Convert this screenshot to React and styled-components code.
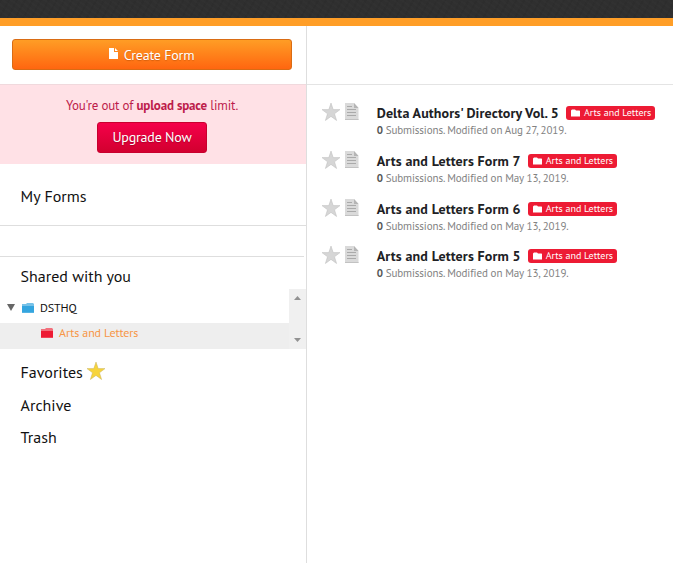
import React from "react";
import styled, { createGlobalStyle } from "styled-components";

const Global = createGlobalStyle`
  * { box-sizing: border-box; }
  body { margin: 0; background: #fff; overflow: hidden; font-family: "PT Sans", "Noto Sans", sans-serif; color: #111; }
  button { font: inherit; margin: 0; }
  svg { display: block; flex: none; }
`;

const Page = styled.div`
  width: 673px;
  height: 563px;
  display: flex;
  flex-direction: column;
`;

const TopBar = styled.header`
  flex: none;
  height: 26px;
  border-bottom: 8px solid #ff9e27;
  background:
    repeating-linear-gradient(37deg, rgba(255, 255, 255, 0.012) 0 2px, transparent 2px 5px),
    repeating-linear-gradient(118deg, rgba(0, 0, 0, 0.05) 0 2px, transparent 2px 7px),
    #2f2f2f;
`;

const Body = styled.div`
  flex: 1;
  display: flex;
`;

const Sidebar = styled.aside`
  width: 307px;
  border-right: 1px solid #dedede;
  display: flex;
  flex-direction: column;
`;

const Main = styled.main`
  flex: 1;
`;

const HeaderCell = styled.div`
  height: 59px;
  padding: 13px 14px 0 12px;
  border-bottom: 1px solid ${(p) => p.$line};
`;

const Text = styled.span`
  font-size: ${(p) => p.$size}px;
  letter-spacing: ${(p) => p.$track || 0}px;
  white-space: nowrap;
`;

const CreateButton = styled.button`
  width: 280px;
  height: 31px;
  display: flex;
  align-items: center;
  justify-content: center;
  gap: 6px;
  padding: 1px 1px 0 0;
  border: 1px solid #d96c14;
  border-radius: 3px;
  background: linear-gradient(#ff9d25, #ff6610);
  color: #fff;
  text-shadow: 0 1px 1px rgba(150, 60, 0, 0.4);
  svg { margin-top: -4px; }
`;

const Notice = styled.section`
  height: 79px;
  background: #ffe1e6;
  display: flex;
  flex-direction: column;
  align-items: center;
  color: #bd1c4b;
  padding: 11px 2px 0 0;
`;

const NoticeText = styled.p`
  margin: 0 0 6px;
  font-size: 13px;
  line-height: 20px;
  letter-spacing: -0.17px;
  white-space: nowrap;
`;

const UpgradeButton = styled.button`
  width: 110px;
  height: 31px;
  padding: 0 0 3px;
  border: 1px solid #c8002e;
  border-radius: 3px;
  background: linear-gradient(#f5004a, #d2002f);
  color: #fff;
  text-shadow: 0 1px 1px rgba(100, 0, 20, 0.4);
`;

const MyForms = styled.div`
  height: 62px;
  padding: 2px 0 0 20.6px;
  display: flex;
  align-items: center;
  border-bottom: 1px solid #dedede;
`;

const SharedHeading = styled.div`
  margin: 30px 2px 0 0;
  height: 33px;
  padding: 8px 0 0 20.6px;
  border-top: 1px solid #dedede;
  line-height: 22px;
`;

const Tree = styled.div`
  height: 60px;
  display: flex;
`;

const TreeItems = styled.div`
  flex: 1;
`;

const TreeRow = styled.div`
  height: ${(p) => (p.$selected ? 26 : 34)}px;
  padding: ${(p) => (p.$selected ? "0 0 6px 41px" : "3px 0 0 7px")};
  display: flex;
  align-items: center;
  background: ${(p) => (p.$selected ? "#eee" : "#fff")};
  color: ${(p) => (p.$selected ? "#f79646" : "#111")};
  span { margin-left: 6px; margin-top: ${(p) => (p.$selected ? -1 : 0)}px; }
  svg + svg { margin-left: 7px; }
`;

const Scrollbar = styled.div`
  width: 17px;
  padding: 7px 0;
  background: #f0f0f0;
  display: flex;
  flex-direction: column;
  align-items: center;
  justify-content: space-between;
`;

const NavList = styled.nav`
  padding: 7px 0 0 20.6px;
`;

const NavItem = styled.div`
  height: 32.5px;
  display: flex;
  align-items: center;
  gap: 4px;
  svg { margin-top: -2px; }
`;

const FormList = styled.div`
  padding: 17.3px 0 0 15px;
`;

const FormRow = styled.article`
  height: 47.67px;
  display: flex;
`;

const RowIcons = styled.div`
  width: 54.7px;
  display: flex;
  gap: 5px;
  svg { margin-top: 1px; }
`;

const FormTitle = styled.div`
  height: 20px;
  display: flex;
  gap: 7px;
  font-weight: 700;
  color: #202124;
  line-height: 23px;
`;

const FormMeta = styled.div`
  font-size: 11px;
  letter-spacing: -0.1px;
  line-height: 17px;
  color: #828282;
  white-space: nowrap;
  b { color: #555; font-weight: 600; }
`;

const Tag = styled.span`
  width: 89px;
  height: 14px;
  margin-top: 4px;
  padding-left: 5px;
  display: flex;
  align-items: center;
  gap: 4px;
  border-radius: 3px;
  background: #ed1b34;
  color: #fff;
  font-weight: 400;
  line-height: 14px;
`;

const STAR = "M9 0 11.2 6.6H18L12.5 10.8 14.6 17.5 9 13.4 3.4 17.5 5.5 10.8 0 6.6H6.8Z";

const Star = ({ color, edge }) => (
  <svg width="18" height="18" viewBox="0 0 18 18">
    <path d={STAR} fill={color} stroke={edge} strokeWidth=".5" />
  </svg>
);

const FormIcon = () => (
  <svg width="14" height="18" viewBox="0 0 14 18">
    <path d="M0 0H9L13.5 5V17H0Z" fill="#dadada" />
    <path d="M9 0V5H13.5Z" fill="#b5b5b5" />
    <path d="M2 3.5H7M2 6.5H11M2 9.5H11M2 12.5H11" stroke="#aaa" strokeWidth="1.2" />
    <path d="M0 16.5H13.5" stroke="#c2c2c2" />
  </svg>
);

const Folder = ({ color, lid }) => (
  <svg width="12" height="10" viewBox="0 0 12 10">
    <path d="M0 1H4L5 0H11L12 1V10H0Z" fill={lid} />
    <path d="M0 3H12V9.5H0Z" fill={color} />
  </svg>
);

const TagFolder = () => (
  <svg width="9" height="8" viewBox="0 0 9 8">
    <path d="M0 1.5 1 .5H4L5 1.5H8.5L9 2V7.5H0Z" fill="#fff" />
  </svg>
);

const PageIcon = () => (
  <svg width="9" height="11" viewBox="0 0 9 11">
    <path d="M0 0H5V4H9V11H0ZM6 0 9 3H6Z" fill="#fff" />
  </svg>
);

const Arrow = ({ up }) => (
  <svg width="7" height="4" viewBox="0 0 7 4">
    <path d={up ? "M3.5 0 7 4H0Z" : "M0 0H7L3.5 4Z"} fill="#929292" />
  </svg>
);

const forms = [
  { title: "Delta Authors' Directory Vol. 5", date: "Aug 27, 2019" },
  { title: "Arts and Letters Form 7", date: "May 13, 2019" },
  { title: "Arts and Letters Form 6", date: "May 13, 2019" },
  { title: "Arts and Letters Form 5", date: "May 13, 2019" },
];

export default function App() {
  return (
    <Page>
      <Global />
      <TopBar />
      <Body>
        <Sidebar>
          <HeaderCell $line="#f0d9dd">
            <CreateButton>
              <PageIcon />
              <Text $size={14} $track={-0.2}>Create Form</Text>
            </CreateButton>
          </HeaderCell>
          <Notice>
            <NoticeText>You're out of <b>upload space</b> limit.</NoticeText>
            <UpgradeButton><Text $size={14} $track={-0.2}>Upgrade Now</Text></UpgradeButton>
          </Notice>
          <MyForms><Text $size={16}>My Forms</Text></MyForms>
          <SharedHeading><Text $size={16}>Shared with you</Text></SharedHeading>
          <Tree>
            <TreeItems>
              <TreeRow>
                <svg width="8" height="7" viewBox="0 0 8 7"><path d="M0 0H8L4 7Z" fill="#666" /></svg>
                <Folder color="#34a5df" lid="#77c2e8" />
                <Text $size={12} $track={-0.1}>DSTHQ</Text>
              </TreeRow>
              <TreeRow $selected>
                <Folder color="#ed1b34" lid="#f2707c" />
                <Text $size={12} $track={-0.1}>Arts and Letters</Text>
              </TreeRow>
            </TreeItems>
            <Scrollbar><Arrow up /><Arrow /></Scrollbar>
          </Tree>
          <NavList>
            <NavItem><Text $size={16}>Favorites</Text><Star color="#f7d43c" edge="#c9b463" /></NavItem>
            <NavItem><Text $size={16}>Archive</Text></NavItem>
            <NavItem><Text $size={16}>Trash</Text></NavItem>
          </NavList>
        </Sidebar>
        <Main>
          <HeaderCell $line="#e4e4e4" />
          <FormList>
            {forms.map((form) => (
              <FormRow key={form.title}>
                <RowIcons><Star color="#d6d6d6" edge="#bdbdbd" /><FormIcon /></RowIcons>
                <div>
                  <FormTitle>
                    <Text $size={14} $track={0.13}>{form.title}</Text>
                    <Tag><TagFolder /><Text $size={10}>Arts and Letters</Text></Tag>
                  </FormTitle>
                  <FormMeta><b>0</b> Submissions. Modified on {form.date}.</FormMeta>
                </div>
              </FormRow>
            ))}
          </FormList>
        </Main>
      </Body>
    </Page>
  );
}
